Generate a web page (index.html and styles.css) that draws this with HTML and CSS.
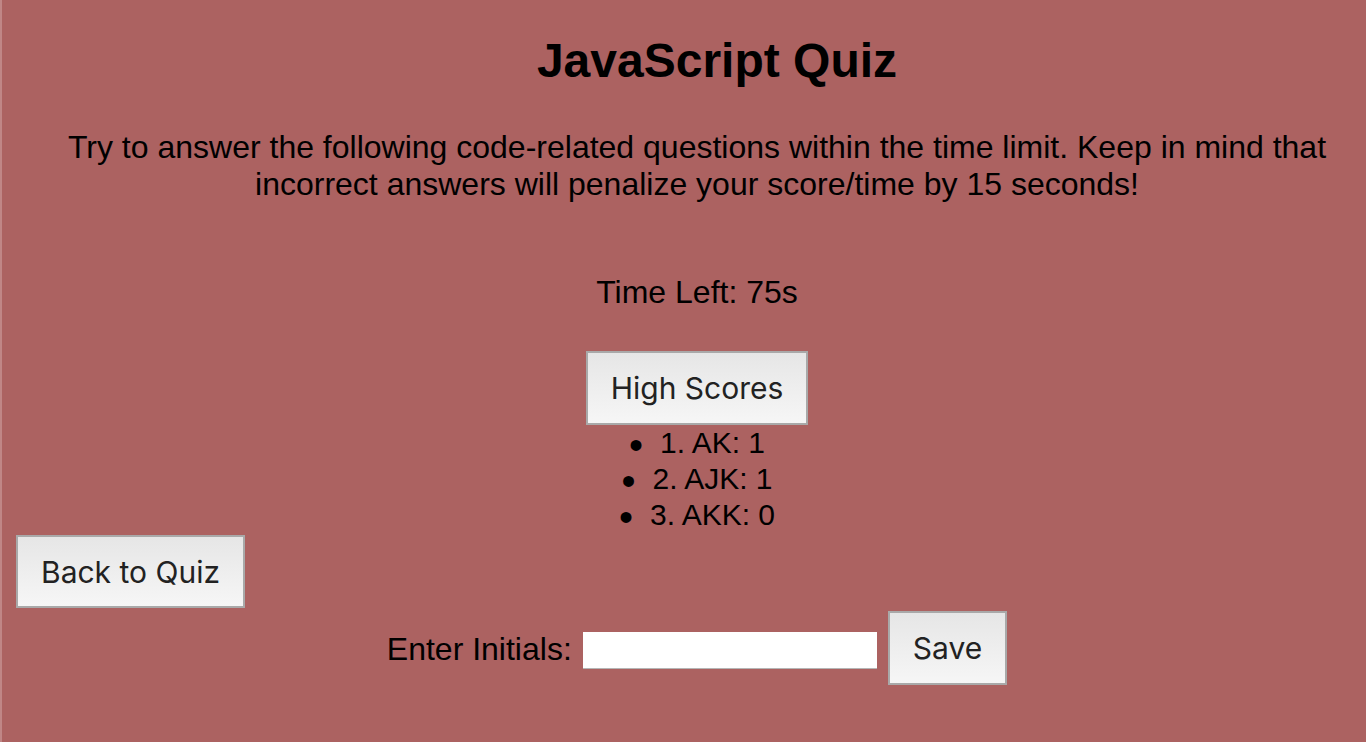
FILE: index.html
```html
<!DOCTYPE html>
<html lang="en">
<head>
<meta charset="utf-8">
<title>JavaScript Quiz</title>
<link rel="stylesheet" href="styles.css">
</head>
<body>
  <header class="intro">
    <h1 class="title">JavaScript Quiz</h1>
    <p class="lead">Try to answer the following code-related questions within the time limit. Keep in mind that incorrect answers will penalize your score/time by 15 seconds!</p>
  </header>
  <div class="timer">Time Left: 75s</div>
  <section class="scores">
    <button class="btn" type="button">High Scores</button>
    <ul class="score-list">
      <li>1. AK: 1</li>
      <li>2. AJK: 1</li>
      <li>3. AKK: 0</li>
    </ul>
  </section>
  <div class="back">
    <button class="btn" type="button">Back to Quiz</button>
  </div>
  <form class="initials">
    <label class="initials-label" for="initials">Enter Initials:</label>
    <input class="initials-input" id="initials" type="text">
    <button class="btn" type="button">Save</button>
  </form>
</body>
</html>
```
FILE: styles.css
```css
html {
  background: #ac6261;
}
body {
  margin: 0;
  min-height: 742px;
  padding: 0 8px 0 6px;
  border-left: 2px solid #c08686;
  background: #ac6261;
  color: #000;
  font-family: "Liberation Sans", Arial, sans-serif;
  font-size: 32px;
  box-sizing: border-box;
}
.intro {
  text-align: center;
}
.title {
  margin: 33px 0 0;
  padding-left: 68px;
  font-size: 48px;
  line-height: 56px;
  font-weight: bold;
}
.lead {
  margin: 40px 0 0;
  padding-left: 28px;
  line-height: 37px;
}
.timer {
  margin-top: 71px;
  padding-left: 28px;
  text-align: center;
  line-height: 37px;
}
.scores {
  margin-top: 40px;
  padding-left: 28px;
  text-align: center;
}
.btn {
  box-sizing: border-box;
  height: 74px;
  padding: 0 23px;
  border: 2px solid #a9a9a9;
  border-radius: 0;
  background: linear-gradient(#e6e6e6, #f6f6f6);
  color: #222;
  font-family: Inter, "Liberation Sans", sans-serif;
  font-size: 30px;
  line-height: 38px;
  cursor: pointer;
}
.score-list {
  margin: 0;
  padding: 0;
  list-style: none;
  font-size: 30px;
  line-height: 36px;
}
.score-list li::before {
  content: "\2022";
  display: inline-block;
  margin-right: 17px;
  font-size: 40px;
  line-height: 0;
  vertical-align: -6px;
}
.back {
  margin-top: 2px;
  padding-left: 8px;
}
.back .btn {
  height: 73px;
}
.initials {
  display: flex;
  justify-content: center;
  align-items: center;
  gap: 11px;
  margin: 3px 0 0;
  padding-left: 28px;
}
.initials-label {
  line-height: 37px;
  padding-top: 2px;
}
.initials-input {
  box-sizing: border-box;
  width: 294px;
  height: 37px;
  margin-top: 5px;
  border: none;
  border-bottom: 1px solid #b5b5b5;
  background: #fff;
  font-size: 24px;
  padding: 0 4px;
}
```
